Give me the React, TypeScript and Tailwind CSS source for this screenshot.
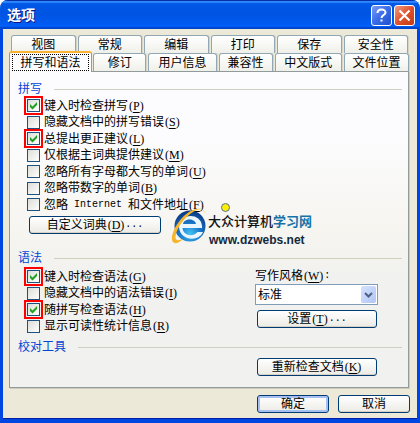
import type { ReactNode } from "react";

type Option = { label: string; mnemonic: string; checked?: boolean };

const topTabs = ["视图", "常规", "编辑", "打印", "保存", "安全性"];
const bottomTabs = ["拼写和语法", "修订", "用户信息", "兼容性", "中文版式", "文件位置"];

const spellingOptions: Option[] = [
  { label: "键入时检查拼写", mnemonic: "P", checked: true },
  { label: "隐藏文档中的拼写错误", mnemonic: "S" },
  { label: "总提出更正建议", mnemonic: "L", checked: true },
  { label: "仅根据主词典提供建议", mnemonic: "M" },
  { label: "忽略所有字母都大写的单词", mnemonic: "U" },
  { label: "忽略带数字的单词", mnemonic: "B" },
  { label: "忽略 Internet 和文件地址", mnemonic: "F" },
];

const grammarOptions: Option[] = [
  { label: "键入时检查语法", mnemonic: "G", checked: true },
  { label: "隐藏文档中的语法错误", mnemonic: "I" },
  { label: "随拼写检查语法", mnemonic: "H", checked: true },
  { label: "显示可读性统计信息", mnemonic: "R" },
];

// Latin text is set smaller so that two letters take the room of one Chinese character
function Latin({ children }: { children: ReactNode }) {
  return (
    <span className="whitespace-pre font-['Liberation_Mono',monospace] text-[10px]">
      {children}
    </span>
  );
}

function Mnemonic({ letter, after = "" }: { letter: string; after?: string }) {
  return (
    <>
      <span className="px-px font-['Liberation_Serif',serif]">
        (<span className="underline underline-offset-2">{letter}</span>)
      </span>
      {after && <Latin>{after}</Latin>}
    </>
  );
}

function Tab({ label, selected = false }: { label: string; selected?: boolean }) {
  if (selected) {
    return (
      <button
        role="tab"
        aria-selected="true"
        className="z-10 -mt-[2px] -mb-px h-[21px] rounded-t-[3px] border-x border-t-2 border-x-[#919b9c] border-t-[#f9b233] bg-[#fcfcfe] px-[2px]"
      >
        <span className="flex h-[17px] items-center justify-center border border-dotted border-black">
          {label}
        </span>
      </button>
    );
  }
  return (
    <button
      role="tab"
      aria-selected="false"
      className="mx-px flex h-[18px] items-center justify-center rounded-t-[3px] border border-b-0 border-[#91a7b4] bg-linear-to-b from-white to-[#f0f0ea] shadow-[1px_0_0_#d8d4c4]"
    >
      {label}
    </button>
  );
}

function Section({ title }: { title: string }) {
  return (
    <div className="flex h-4 items-center gap-3 pr-[6px] pl-2">
      <h2 className="text-[#0046d5]">{title}</h2>
      <div className="h-px flex-1 bg-[#d0d0bf]" />
    </div>
  );
}

function CheckRow({ option }: { option: Option }) {
  const parts = option.label.split(/( Internet )/);
  return (
    <label className="flex h-4 items-center gap-1 whitespace-nowrap odd:h-[17px]">
      <span className="grid">
        <input
          type="checkbox"
          defaultChecked={option.checked}
          className="peer col-start-1 row-start-1 size-[13px] appearance-none border border-[#1c5180] bg-linear-to-br from-[#dcdcd7] to-white outline-[#ff0000] checked:outline-2 checked:outline-offset-1"
        />
        <svg
          viewBox="0 0 13 13"
          className="pointer-events-none invisible col-start-1 row-start-1 size-[13px] peer-checked:visible"
        >
          <path d="M3 5v3l2.5 2.5L10 6V3L5.5 7.5z" fill="#21a121" />
        </svg>
      </span>
      <span className="flex items-center">
        {parts.map((part, i) =>
          part === " Internet " ? <Latin key={i}>{part}</Latin> : <span key={i}>{part}</span>
        )}
        <Mnemonic letter={option.mnemonic} />
      </span>
    </label>
  );
}

function Button({
  children,
  className = "w-[120px]",
  primary = false,
}: {
  children: ReactNode;
  className?: string;
  primary?: boolean;
}) {
  return (
    <button
      className={`flex h-[18px] items-center justify-center rounded-[3px] border border-[#003c74] bg-linear-to-b from-white to-[#ecebe5] ${
        primary ? "shadow-[inset_0_0_0_2px_#a6c0f2]" : "shadow-[inset_0_-1px_0_#d6d0c5]"
      } ${className}`}
    >
      {children}
    </button>
  );
}

function SiteMark() {
  return (
    <div className="pointer-events-none absolute top-[132px] left-[158px] flex items-start">
      <svg viewBox="0 0 42 42" className="h-[42px] w-[42px]">
        <defs>
          <radialGradient id="globe" cx="50%" cy="75%" r="70%">
            <stop offset="0" stopColor="#45c4f5" />
            <stop offset="0.5" stopColor="#1976c8" />
            <stop offset="1" stopColor="#0b3c88" />
          </radialGradient>
        </defs>
        <circle cx="22" cy="22" r="15.5" fill="url(#globe)" />
        <path
          d="M31 24H14.500C15 31 24 34 29.500 28H35C31 38 12 37 11 23C10.500 9 33 8 34 22V24ZM15 20H28C27 14 16 14 15 20Z"
          fill="#eaf6ff"
          fillRule="evenodd"
        />
        <path
          d="M37 10C37 2 24 3 14 14C4 25 1 38 7 39C9 40 13 37 15 35C10 37 6 37 8 30C10 22 17 13 25 8C31 4 36 4 37 10Z"
          fill="#f6b52b"
        />
      </svg>
      <div className="-ml-[2px] pt-2 whitespace-nowrap">
        <div className="text-[13px] leading-[20px] font-medium text-[#111]">
          大众计算机<span className="font-bold text-[#1673a8]">学习网</span>
        </div>
        <div className="pl-px font-['Liberation_Sans',sans-serif] text-[12px] leading-[16px] font-bold text-[#14293d]">
          www.dzwebs.net
        </div>
      </div>
      <span className="absolute -top-px left-[53px] size-[9px] rounded-full border border-[#55759a] bg-[#ffee00]" />
    </div>
  );
}

export default function App() {
  return (
    <div
      role="dialog"
      aria-label="选项"
      className="overflow-hidden rounded-t-lg bg-[#ece9d8] font-['Liberation_Sans','Noto_Sans_CJK_SC',sans-serif] text-[12px] leading-4 text-black"
    >
      <header className="flex h-[29px] items-center justify-between bg-linear-to-b from-[#0058e6] via-[#0054e3] to-[#0060fc] pr-[5px] pl-[7px] shadow-[inset_0_1px_0_#0831a9,inset_0_3px_1px_#2c86fc,inset_0_-2px_1px_#0046cc]">
        <h1 className="text-[14px] font-bold text-white text-shadow-[1px_1px_0_#0a1883]">选项</h1>
        <div className="flex gap-[2px] pt-[2px]">
          <button
            aria-label="帮助"
            className="grid size-[21px] place-items-center rounded-[3px] border border-white bg-linear-to-br from-[#7a9cf5] via-[#3a6be8] to-[#1c4fd0]"
          >
            <svg viewBox="0 0 19 19" className="size-[19px]">
              <path
                d="M5.500 7C5.500 2.500 13.500 2.500 13.500 6.500C13.500 9 9.500 9 9.500 12"
                fill="none"
                stroke="white"
                strokeWidth="2"
              />
              <rect x="8.500" y="13.500" width="2" height="2" fill="white" />
            </svg>
          </button>
          <button
            aria-label="关闭"
            className="grid size-[21px] place-items-center rounded-[3px] border border-white bg-linear-to-br from-[#ee9a80] via-[#e1502c] to-[#c33a14]"
          >
            <svg viewBox="0 0 19 19" className="size-[19px]">
              <path d="M4.500 4.500l10 10M14.500 4.500l-10 10" stroke="white" strokeWidth="2.200" />
            </svg>
          </button>
        </div>
      </header>

      <div className="border-x-[3px] border-b-4 border-[#0046e0] px-[6px] pt-[6px] pb-[6px] shadow-[inset_0_-1px_0_#001ea0]">
        <div role="tablist" className="mr-px">
          <div className="grid grid-cols-6 px-px">
            {topTabs.map((label) => (
              <Tab key={label} label={label} />
            ))}
          </div>
          <div className="grid grid-cols-[83fr_55fr_70fr_56fr_69fr_67fr]">
            {bottomTabs.map((label, i) => (
              <Tab key={label} label={label} selected={i === 0} />
            ))}
          </div>
        </div>

        <main className="relative mr-[2px] border border-[#919b9c] bg-linear-to-b from-[#fcfcfe] from-20% via-[#f6f5f0] via-50% to-[#f1f1ef] to-65% pt-[9px] pb-[11px] shadow-[1px_1px_0_#d0ccbd]">
          <Section title="拼写" />
          <div className="pl-[17px]">
            {spellingOptions.map((option) => (
              <CheckRow key={option.mnemonic} option={option} />
            ))}
          </div>
          <div className="mt-[3px] pl-[19px]">
            <Button className="w-[132px]">
              自定义词典
              <Mnemonic letter="D" after="..." />
            </Button>
          </div>
          <SiteMark />

          <div className="mt-4">
            <Section title="语法" />
          </div>
          <div className="mt-[2px] flex justify-between pr-[30px] pl-[17px]">
            <div>
              {grammarOptions.map((option) => (
                <CheckRow key={option.mnemonic} option={option} />
              ))}
            </div>
            <div className="w-[123px]">
              <label htmlFor="style" className="flex h-4 items-center">
                写作风格
                <Mnemonic letter="W" after=":" />
              </label>
              <div className="relative">
                <select
                  id="style"
                  className="block h-[21px] w-full appearance-none border border-[#7f9db9] bg-white pl-[2px]"
                >
                  <option>标准</option>
                </select>
                <span className="pointer-events-none absolute top-[2px] right-[2px] grid h-[17px] w-[15px] place-items-center rounded-[2px] bg-linear-to-br from-[#d6e2fd] to-[#b0c6f5]">
                  <svg viewBox="0 0 9 6" className="h-[6px] w-[9px]">
                    <path d="M1 1l3.500 3.500L8 1" fill="none" stroke="#4d6185" strokeWidth="2" />
                  </svg>
                </span>
              </div>
              <div className="mt-[5px] pl-[2px]">
                <Button>
                  设置
                  <Mnemonic letter="T" after="..." />
                </Button>
              </div>
            </div>
          </div>

          <div className="mt-[5px]">
            <Section title="校对工具" />
          </div>
          <div className="mt-[3px] flex justify-end pr-[31px]">
            <Button>
              重新检查文档
              <Mnemonic letter="K" />
            </Button>
          </div>
        </main>

        <footer className="mt-[7px] flex justify-end gap-[9px] pr-px">
          <Button className="w-[72px]" primary>
            确定
          </Button>
          <Button className="w-[72px]">取消</Button>
        </footer>
      </div>
    </div>
  );
}
